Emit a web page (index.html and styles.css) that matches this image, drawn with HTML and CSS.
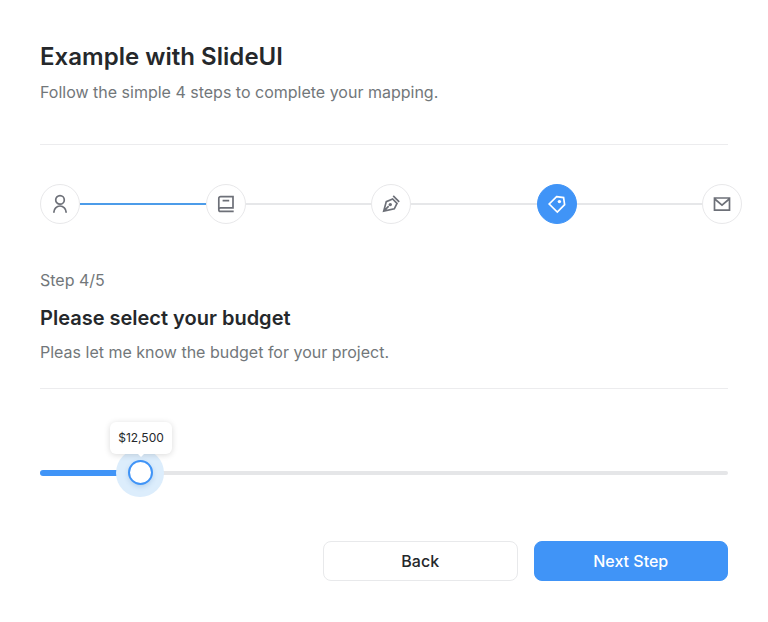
FILE: index.html
```html
<!DOCTYPE html>
<html lang="en">
<head>
<meta charset="utf-8">
<title>Example with SlideUI</title>
<link rel="stylesheet" href="styles.css">
</head>
<body>
<main class="wizard">
  <header class="intro">
    <h1 class="title">Example with SlideUI</h1>
    <p class="text intro-text">Follow the simple 4 steps to complete your mapping.</p>
  </header>
  <div class="stepper">
    <span class="step"><svg class="icon" viewBox="0 0 20 20"><circle cx="10" cy="5.9" r="4.3"/><path d="M3.9 18.8v-.7a6.1 6.1 0 0 1 12.2 0v.7"/></svg></span>
    <span class="line line-done"></span>
    <span class="step"><svg class="icon" viewBox="0 0 20 20"><path d="M17 14.7V2.6H4.6a1.8 1.8 0 0 0-1.8 1.8v11.3a1.7 1.7 0 0 0 1.7 1.7h13.2M17 13.9H4.5a1.7 1.7 0 0 0-1.7 1.8M6.6 6.6h6.6"/></svg></span>
    <span class="line"></span>
    <span class="step"><svg class="icon" viewBox="0 0 20 20"><path d="M2.7 17.1 5.3 7.6l6.3-2.7 4.4 4.6-2.7 5.3z M2.7 17.1l5-5M12.2 1.8l6 6"/><circle class="dot" cx="9.3" cy="10.6" r="1.7"/></svg></span>
    <span class="line"></span>
    <span class="step step-current"><svg class="icon" viewBox="0 0 20 20"><path d="M9.6 2.7l7 .9 1 7-7.3 7.4-8.1-8z"/><circle class="dot" cx="12.4" cy="7.6" r="1.7"/></svg></span>
    <span class="line"></span>
    <span class="step"><svg class="icon" viewBox="0 0 20 20"><path d="M2.5 4h15v12.2h-15zM2.8 5l7.2 6.1L17.2 5"/></svg></span>
  </div>
  <section class="question">
    <p class="text">Step 4/5</p>
    <h2 class="subtitle">Please select your budget</h2>
    <p class="text question-text">Pleas let me know the budget for your project.</p>
  </section>
  <div class="slider">
    <span class="track"></span>
    <span class="range"></span>
    <span class="halo"><span class="thumb"></span></span>
    <span class="tooltip">$12,500</span>
  </div>
  <div class="actions">
    <button class="button">Back</button>
    <button class="button button-primary">Next Step</button>
  </div>
</main>
</body>
</html>
```
FILE: styles.css
```css
* { box-sizing: border-box; }
body {
  margin: 0;
  background: #fff;
  color: #25282b;
  font-family: Inter, sans-serif;
}
h1, h2, p { margin: 0; }
.wizard { padding: 40px; }
.intro {
  height: 105px;
  border-bottom: 1px solid #ececee;
}
.title {
  font-size: 24px;
  line-height: 34px;
  font-weight: 600;
  letter-spacing: 0.03px;
}
.text {
  font-size: 16px;
  line-height: 24px;
  color: #72777a;
}
.intro-text { margin-top: 6px; }
.stepper {
  display: flex;
  align-items: center;
  width: 702px;
  margin-top: 39px;
}
.step {
  display: flex;
  align-items: center;
  justify-content: center;
  flex: none;
  width: 40px;
  height: 40px;
  border: 1px solid #e8e8ea;
  border-radius: 50%;
  background: #fff;
  color: #6d7078;
}
.step-current {
  border-color: #4094f7;
  background: #4094f7;
  color: #fff;
}
.icon {
  width: 20px;
  height: 20px;
  fill: none;
  stroke: currentColor;
  stroke-width: 1.7;
}
.icon .dot { fill: currentColor; stroke: none; }
.line { flex: 1; height: 2px; background: #e6e7e9; }
.line-done { background: #4c9ce9; }
.question {
  height: 121px;
  margin-top: 44px;
  border-bottom: 1px solid #ececee;
}
.subtitle {
  margin-top: 12px;
  font-size: 20px;
  line-height: 28px;
  font-weight: 600;
}
.question-text { margin-top: 8px; }
.slider {
  position: relative;
  height: 48px;
  margin-top: 60px;
}
.track, .range, .halo, .tooltip { position: absolute; }
.track {
  top: 22px;
  left: 0;
  width: 100%;
  height: 4px;
  border-radius: 2px;
  background: #e5e6e8;
}
.range {
  top: 21px;
  left: 0;
  width: 100px;
  height: 6px;
  border-radius: 3px;
  background: #4094f7;
}
.halo {
  top: -0.5px;
  left: 76px;
  display: flex;
  align-items: center;
  justify-content: center;
  width: 48px;
  height: 48px;
  border-radius: 50%;
  background: #dcedfc;
}
.thumb {
  width: 25px;
  height: 25px;
  border: 2px solid #4094f7;
  border-radius: 50%;
  background: #fff;
  box-shadow: 0 2px 5px #2b6cb033;
}
.tooltip {
  top: -27px;
  left: 70px;
  width: 62px;
  height: 32px;
  border-radius: 6px;
  background: #fff;
  box-shadow: 0 1px 6px #00000026;
  font-size: 12px;
  line-height: 32px;
  text-align: center;
}
.tooltip::after {
  content: "";
  position: absolute;
  top: 31px;
  left: 27px;
  border: 4px solid transparent;
  border-top-color: #fff;
  border-bottom: 0;
}
.actions {
  display: flex;
  justify-content: flex-end;
  gap: 16px;
  margin-top: 44px;
}
.button {
  width: 194.5px;
  height: 40px;
  padding: 0;
  border: 1px solid #e8e9eb;
  border-radius: 8px;
  background: #fff;
  color: #25282b;
  font: 500 16px/24px Inter, sans-serif;
}
.button-primary {
  border-color: #4094f7;
  background: #4094f7;
  color: #fff;
}
```
